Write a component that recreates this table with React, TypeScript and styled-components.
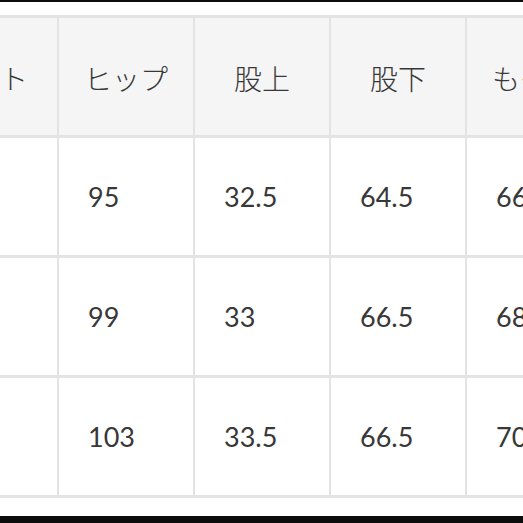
import React from 'react';
import styled, { createGlobalStyle } from 'styled-components';

const GlobalStyle = createGlobalStyle`
  html, body {
    margin: 0;
    padding: 0;
    background: #ffffff;
  }
  body {
    font-family: Lato, "Noto Sans CJK JP", sans-serif;
  }
`;

const headers = ['ウエスト', 'ヒップ', '股上', '股下', 'もも幅'];
const rows = [
  ['64', '95', '32.5', '64.5', '66'],
  ['68', '99', '33', '66.5', '68'],
  ['72', '103', '33.5', '66.5', '70'],
];

function App() {
  return (
    <>
      <GlobalStyle />
      <Frame>
        <Bar $height={2} />
        <Viewport>
          <Table>
            {headers.map((label) => (
              <HeadCell key={label}>{label}</HeadCell>
            ))}
            {rows.map((row, r) =>
              row.map((value, c) => (
                <BodyCell key={`${r}-${c}`}>{value}</BodyCell>
              )),
            )}
          </Table>
        </Viewport>
        <Bar $height={7} />
      </Frame>
    </>
  );
}

const Frame = styled.div`
  width: 523px;
  height: 523px;
  display: flex;
  flex-direction: column;
  justify-content: space-between;
  overflow: hidden;
  background: #ffffff;
`;

const Bar = styled.div<{ $height: number }>`
  height: ${(p) => p.$height}px;
  flex-shrink: 0;
  background: #0c0c0c;
`;

const Viewport = styled.div`
  flex: 1;
  overflow: hidden;
  padding-top: 13px;
`;

const Table = styled.div`
  display: grid;
  grid-template-columns: 170px repeat(4, 134px);
  grid-auto-rows: 117px;
  column-gap: 2px;
  row-gap: 3px;
  padding: 3px 2px;
  margin-left: -115px;
  width: max-content;
  background: #e3e3e3;
  color: #333333;
`;

const HeadCell = styled.div`
  background: #f5f5f5;
  display: flex;
  align-items: center;
  justify-content: center;
  font-size: 28px;
  font-family: "Noto Sans CJK JP", sans-serif;
  font-weight: 300;
  color: #383838;
  padding-top: 2px;
`;

const BodyCell = styled.div`
  background: #ffffff;
  display: flex;
  align-items: center;
  padding-left: 29px;
  font-size: 27px;
  font-family: Lato, sans-serif;
  color: #383838;
  white-space: nowrap;
  overflow: hidden;
`;

export default App;
